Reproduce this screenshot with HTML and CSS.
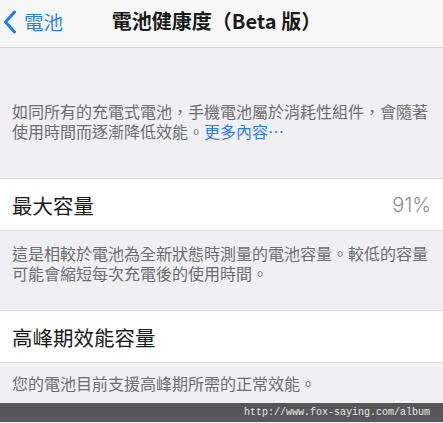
FILE: index.html
```html
<!DOCTYPE html>
<html lang="zh-Hant">
<head>
<meta charset="utf-8">
<link rel="stylesheet" href="styles.css">
</head>
<body>
<div class="screen">
  <header class="nav">
    <div class="back">
      <svg class="chev" width="14" height="24" viewBox="0 0 14 24"><path d="M11.5 2 L2.5 12 L11.5 22" fill="none" stroke="#1f7bf0" stroke-width="3" stroke-linecap="round" stroke-linejoin="round"/></svg>
      <span class="back-label">電池</span>
    </div>
    <div class="title">電池健康度（Beta 版）</div>
    <div></div>
  </header>
  <p class="desc">如同所有的充電式電池，手機電池屬於消耗性組件，會隨著使用時間而逐漸降低效能。<span class="link">更多內容⋯</span></p>
  <div class="row"><span class="label">最大容量</span><span class="value">91%</span></div>
  <p class="note">這是相較於電池為全新狀態時測量的電池容量。較低的容量可能會縮短每次充電後的使用時間。</p>
  <div class="row row2"><span class="label">高峰期效能容量</span></div>
  <p class="note note3">您的電池目前支援高峰期所需的正常效能。</p>
  <div class="credit">http://www.fox-saying.com/album</div>
</div>
</body>
</html>
```
FILE: styles.css
```css
html, body {
  margin: 0;
  padding: 0;
}
body {
  background: #efeff4;
  font-family: "Noto Sans CJK TC", "Noto Sans", sans-serif;
  overflow: hidden;
}
.screen {
  width: 443px;
  height: 423px;
  display: flex;
  flex-direction: column;
  overflow: hidden;
}
.nav {
  height: 47px;
  background: #f7f7f8;
  border-bottom: 1px solid #cfcfd3;
  display: grid;
  grid-template-columns: 1fr auto 1fr;
  align-items: center;
  flex-shrink: 0;
}
.back {
  display: flex;
  align-items: center;
  padding-left: 3px;
  color: #2a7fe8;
  margin-top: -4px;
}
.chev {
  display: block;
}
.back-label {
  font-size: 19.5px;
  line-height: 24px;
  margin-left: 7px;
}
.title {
  font-size: 20px;
  font-weight: 600;
  color: #1a1a1a;
  line-height: 24px;
  margin-top: -6px;
  margin-left: -10px;
}
.desc {
  margin: 0;
  padding: 53px 12px 37px;
  font-size: 16px;
  line-height: 20px;
  color: #6d6d72;
}
.link {
  color: #2a7fe8;
}
.row {
  height: 51px;
  background: #fff;
  border-top: 1px solid #dcdce0;
  border-bottom: 1px solid #dcdce0;
  display: flex;
  align-items: center;
  justify-content: space-between;
  padding: 0 12px;
  flex-shrink: 0;
}
.label {
  font-size: 20.5px;
  color: #1a1a1a;
}
.value {
  font-family: "Inter", "Liberation Sans", sans-serif;
  font-size: 20px;
  font-weight: 300;
  color: #8e8e93;
}
.note {
  margin: 0;
  padding: 12px 12px 27px;
  font-size: 16px;
  line-height: 20px;
  color: #6d6d72;
}
.note3 {
  padding: 10px 12px 10px;
}
.credit {
  height: 19px;
  background: #58585a;
  color: #e6e6e6;
  font-family: "Liberation Mono", monospace;
  font-size: 10px;
  line-height: 19px;
  text-align: right;
  padding-right: 13px;
  flex-shrink: 0;
}
```
